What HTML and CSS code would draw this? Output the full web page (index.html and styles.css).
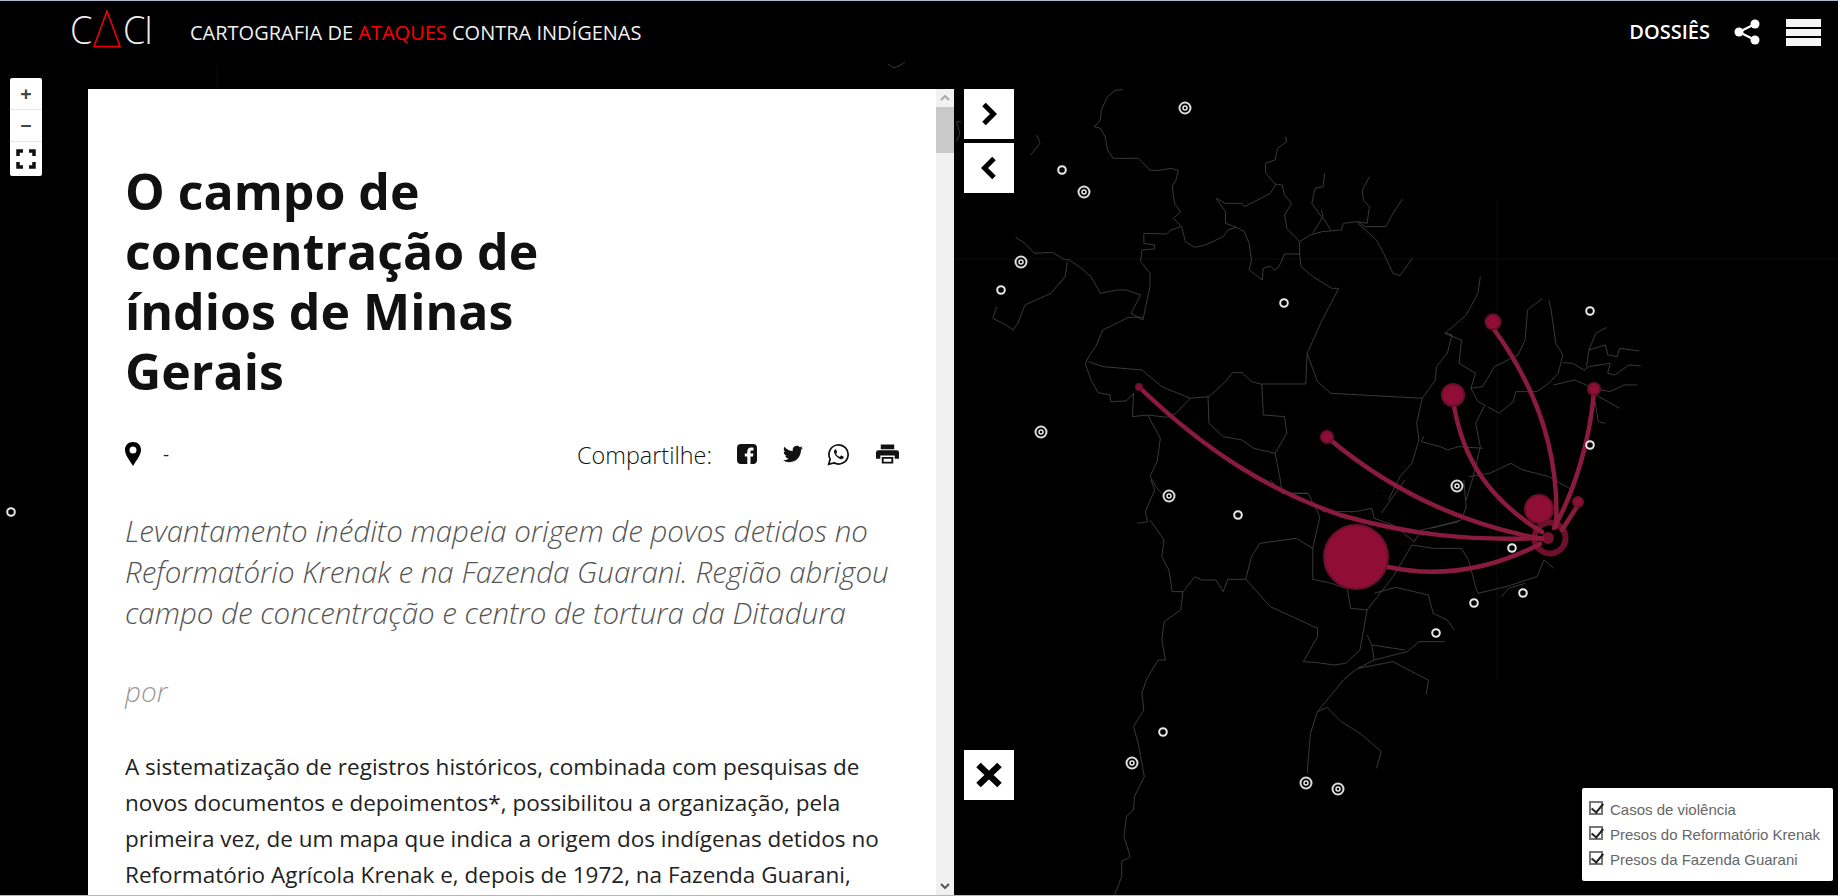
FILE: index.html
```html
<!DOCTYPE html>
<html lang="pt-BR">
<head>
<meta charset="utf-8">
<title>CACI - Cartografia de ataques contra indígenas</title>
<link rel="stylesheet" href="styles.css">
</head>
<body>
<svg class="map" viewBox="0 0 1838 896" width="1838" height="896" aria-hidden="true">
  <path class="faint" d="M954 259H1838M1497 200V680M217 65V89"/>
  <g transform="translate(940,80) scale(.4719,.3333)">
    <path class="border" d="M387 28 370 32 355 50 342 90 340 120 327 140 340 145 350 170 355 210 367 235 405 235 420 235 445 270 460 272 490 265 505 272 500 300 492 320 497 370 510 395 495 415 512 440 520 485 540 502 562 495 570 490 600 470 610 450 628 442 645 455 655 490 660 540 655 570 683 600 685 565 700 558 710 572 720 555 730 522 762 522 762 485 785 465 810 455 850 450 855 430 885 425 900 440 945 440 960 400 980 357"/>
    <path class="border" d="M732 170 735 185 715 205 710 240 690 250 690 280 710 312 725 315 730 345 745 370 730 405 735 445 762 485"/>
    <path class="border" d="M585 355 605 370 640 370 645 380 680 355 700 340 712 312M585 355 605 395 605 430 628 442"/>
    <path class="border" d="M815 280 812 320 795 325 788 370 808 410 815 420 828 450M808 390 812 410 790 460M910 290 895 330 897 360 910 380 905 430 885 425"/>
    <path class="border" d="M885 430 925 480 940 520 960 580 975 587 1000 537"/>
    <path class="border" d="M762 522 765 560 790 590 830 625 845 625 810 720 778 820 800 905 828 940 1022 955"/>
    <path class="border" d="M1145 590 1140 640 1115 705 1070 760 1085 765 1075 820 1052 860 1050 900 1022 955 1010 1030 1015 1080 1000 1150 975 1190 950 1260"/>
    <path class="border" d="M432 460 480 462 490 450 510 440M432 460 432 490 455 495 455 507 428 510 425 545 445 580 445 620 430 720"/>
    <path class="border" d="M160 472 180 490 200 520 238 517 265 540 272 538 295 560 320 590 340 640 375 630 395 630 425 645 405 700 430 720"/>
    <path class="border" d="M270 545 265 590 235 640 180 675 165 730 155 750 140 735 112 715 120 680"/>
    <path class="border" d="M430 712 400 712 345 750 330 800 315 830 308 852 320 900 335 938 360 945 362 965 395 963 410 940 408 1010 440 1005 480 1012 500 1000 530 955 570 950 605 905 620 878 640 878 660 905 680 912 775 912 778 820"/>
    <path class="border" d="M315 845 345 860 428 870 470 920 530 955M568 950 570 1030 600 1070 640 1080 665 1105 710 1120 735 1060 730 1010 685 1005 682 912M710 1120 720 1190 725 1240 780 1240M440 1005 467 1075 460 1145 445 1190 460 1225 470 1240"/>
    <path class="border" d="M1277 655 1245 690 1240 780 1225 825 1175 860 1150 920 1125 925 1140 965 1155 975 1135 1030 1145 1100 1130 1190 1115 1260M1070 760 1105 780 1100 850 1135 880 1125 925"/>
    <path class="border" d="M1290 660 1295 690 1305 790 1320 825 1310 880 1290 910 1265 935 1220 935 1215 965 1185 1000 1160 980M1320 848 1340 850 1365 870 1375 860 1420 850 1415 880 1430 885 1460 855 1485 858"/>
    <path class="border" d="M1413 742 1390 760 1375 810 1370 860M1375 810 1410 795 1415 825 1435 830 1440 805 1482 813M1300 915 1345 900 1385 925 1420 935 1450 915 1478 915M1390 945 1440 985M1385 940 1395 1025 1410 1030"/>
    <path class="border" d="M1025 1070 1020 1085 1060 1100 1075 1110 1100 1100 1150 1105M1120 1190 1165 1180 1210 1150 1235 1170 1290 1190 1340 1230"/>
    <path class="border" d="M205 165 212 190 192 225M45 125 35 125 42 160 35 185"/>
  </g>
  <g transform="translate(940,480) scale(.4719,.3333)">
    <path class="border" d="M447 0 455 30 435 95 440 125 418 130M445 120 475 180 470 230 485 270 492 335 515 335 540 290 555 300 585 300 600 335 610 298 648 298 700 380 800 445 800 470 770 545 800 548 835 555 860 550 890 510 905 390 870 385 863 325"/>
    <path class="border" d="M648 298 660 230 678 190 755 175 790 205 790 298 830 310 860 325"/>
    <path class="border" d="M515 335 510 390 475 425 470 480 478 540 462 540 437 600 428 640 432 690 410 740 420 790 433 890 412 950 410 990 395 1010 390 1070 403 1130 385 1145 385 1190 370 1245"/>
    <path class="border" d="M905 390 960 290 1000 195 1045 205 1105 205 1120 240 1135 320 1140 340 1200 320 1265 290 1280 240 1300 265"/>
    <path class="border" d="M920 340 965 322 1035 345 1045 400 1075 420 1090 450M905 465 915 495 920 540 990 515 1015 485 1070 485M915 495 985 510"/>
    <path class="border" d="M920 540 880 570 855 600 800 695 785 760 778 880M800 695 820 682 850 725 890 760 935 815 925 865M885 565 960 545 1000 575 1035 600 1030 645"/>
    <path class="border" d="M700 0 725 40 780 40 805 110 790 205M935 100 985 0M810 95 880 95 915 85 920 115 960 135 1005 185 1020 150 1100 125M1110 0 1115 80 1105 120 1040 145M1190 350 1205 325 1240 310"/>
  </g>
  <path class="border" d="M888 64 894 68 901 65 905 62"/>

  <circle class="ring" cx="1550" cy="538" r="15.5"/>
  <circle class="hub" cx="1548" cy="538" r="6"/>

  <path class="curve" d="M1139 387C1210 455 1270 490 1340 515 1410 535 1470 541 1542 538"/>
  <path class="curve" d="M1327 437C1380 482 1450 522 1542 539"/>
  <path class="curve" d="M1453 400C1462 460 1490 500 1542 532"/>
  <path class="curve" d="M1493 328C1535 385 1560 450 1556 527"/>
  <path class="curve" d="M1594 392C1590 440 1575 490 1554 528"/>
  <path class="curve" d="M1578 505 1562 530"/>
  <path class="curve" d="M1388 567C1440 578 1490 570 1540 544"/>

  <circle class="node" cx="1356" cy="557" r="32"/>
  <circle class="node" cx="1453" cy="395" r="11"/>
  <circle class="node" cx="1493" cy="322" r="7.5"/>
  <circle class="node" cx="1327" cy="437" r="6"/>
  <circle class="node" cx="1139" cy="387" r="3"/>
  <circle class="node" cx="1594" cy="389" r="6"/>
  <circle class="node" cx="1539" cy="509" r="14"/>
  <circle class="node" cx="1578" cy="502" r="5"/>

  <g class="single">
    <circle cx="11" cy="512" r="3.8"/><circle cx="1062" cy="170" r="3.8"/><circle cx="1001" cy="290" r="3.8"/>
    <circle cx="1284" cy="303" r="3.8"/><circle cx="1590" cy="311" r="3.8"/><circle cx="1590" cy="445" r="3.8"/>
    <circle cx="1238" cy="515" r="3.8"/><circle cx="1512" cy="548" r="3.8"/><circle cx="1523" cy="593" r="3.8"/>
    <circle cx="1474" cy="603" r="3.8"/><circle cx="1436" cy="633" r="3.8"/><circle cx="1163" cy="732" r="3.8"/>
  </g>
  <g class="double">
    <circle cx="1185" cy="108" r="5.5"/><circle cx="1084" cy="192" r="5.5"/><circle cx="1021" cy="262" r="5.5"/>
    <circle cx="1041" cy="432" r="5.5"/><circle cx="1457" cy="486" r="5.5"/><circle cx="1169" cy="496" r="5.5"/>
    <circle cx="1132" cy="763" r="5.5"/><circle cx="1306" cy="783" r="5.5"/><circle cx="1338" cy="789" r="5.5"/>
  </g>
  <g class="dots">
    <circle cx="1185" cy="108" r="2"/><circle cx="1084" cy="192" r="2"/><circle cx="1021" cy="262" r="2"/>
    <circle cx="1041" cy="432" r="2"/><circle cx="1457" cy="486" r="2"/><circle cx="1169" cy="496" r="2"/>
    <circle cx="1132" cy="763" r="2"/><circle cx="1306" cy="783" r="2"/><circle cx="1338" cy="789" r="2"/>
  </g>
</svg>

<header class="topbar">
  <a class="logo">
    <span>C</span>
    <svg class="logo-tri" viewBox="0 0 28 38" width="28" height="38" aria-hidden="true"><path d="M14 1 1 36.500H27Z"/></svg>
    <span>C</span><span class="logo-i">I</span>
  </a>
  <h2 class="site-title">CARTOGRAFIA DE <span class="red">ATAQUES</span> CONTRA INDÍGENAS</h2>
  <nav class="topnav">
    <a class="dossies">DOSSIÊS</a>
    <svg class="share" viewBox="0 0 26 26" width="26" height="26" aria-hidden="true">
      <path class="share-line" d="M21 5 5 13 21 21"/>
      <circle cx="21" cy="5" r="4.500"/><circle cx="5" cy="13" r="4.500"/><circle cx="21" cy="21" r="4.500"/>
    </svg>
    <div class="burger"><i></i><i></i><i></i></div>
  </nav>
</header>

<div class="zoom-control">
  <button class="zoom-btn">+</button>
  <button class="zoom-btn">−</button>
  <button class="zoom-btn zoom-full" aria-label="Tela cheia">
    <svg viewBox="0 0 20 20" width="20" height="20" aria-hidden="true"><path d="M2 7V2H7M13 2H18V7M18 13V18H13M7 18H2V13"/></svg>
  </button>
</div>

<main class="stage">
  <article class="panel">
    <div class="panel-body">
      <h1 class="title">O campo de concentração de índios de Minas Gerais</h1>
      <div class="meta">
        <div class="place">
          <svg class="pin" viewBox="0 0 18 24" width="18" height="24" aria-hidden="true"><path fill-rule="evenodd" d="M9 0C4 0 1 3.500 1 8c0 5 5 11 8 16 3-5 8-11 8-16C17 3.500 14 0 9 0ZM9 4.500A3.500 3.500 0 1 1 9 11.500 3.500 3.500 0 0 1 9 4.500Z"/></svg>
          <span>-</span>
        </div>
        <div class="sharebar">
          <span class="share-label">Compartilhe:</span>
          <svg class="ic" viewBox="0 0 20 20" width="20" height="20" aria-hidden="true"><path fill-rule="evenodd" d="M4 0H16A4 4 0 0 1 20 4V16A4 4 0 0 1 16 20H13.500V12.500H16L16.400 9.500H13.500V8C13.500 7 13.800 6.500 15 6.500H16.500V3.800C16 3.700 15 3.600 14 3.600 11.800 3.600 10.300 5 10.300 7.500V9.500H7.800V12.500H10.300V20H4A4 4 0 0 1 0 16V4A4 4 0 0 1 4 0Z"/></svg>
          <svg class="ic ic-tw" viewBox="0 0 24 24" width="20" height="20" aria-hidden="true"><path d="M23.953 4.570a10 10 0 0 1-2.825.775 4.958 4.958 0 0 0 2.163-2.723c-.951.555-2.005.959-3.127 1.184a4.920 4.920 0 0 0-8.384 4.482C7.690 8.095 4.067 6.130 1.640 3.162a4.822 4.822 0 0 0-.666 2.475c0 1.710.870 3.213 2.188 4.096a4.904 4.904 0 0 1-2.228-.616v.060a4.923 4.923 0 0 0 3.946 4.827 4.996 4.996 0 0 1-2.212.085 4.936 4.936 0 0 0 4.604 3.417 9.867 9.867 0 0 1-6.102 2.105c-.390 0-.779-.023-1.170-.067a13.995 13.995 0 0 0 7.557 2.209c9.053 0 13.998-7.496 13.998-13.985 0-.210 0-.420-.015-.630A9.935 9.935 0 0 0 24 4.590Z"/></svg>
          <svg class="ic ic-wa" viewBox="0 0 24 24" width="23" height="23" aria-hidden="true">
            <path class="wa-ring" d="M1.800 22.200 3.300 16.800A10 10 0 1 1 7.200 20.700Z"/>
            <path d="M8.700 6.500C8 6.900 7.200 7.800 7.300 9.200 7.500 11.500 9.800 15.200 13.700 16.700 15.300 17.200 16.600 16.700 17.200 15.700 17.500 15.100 17.500 14.500 17.400 14.300L15.100 13.100C14.800 13 14.600 13 14.400 13.300L13.600 14.300C13.400 14.500 13.200 14.500 13 14.400 11.500 13.800 10.400 12.800 9.700 11.400 9.600 11.100 9.600 11 9.800 10.800L10.400 10 10.500 9.500 9.500 6.800C9.300 6.400 9.100 6.400 8.700 6.500Z"/>
          </svg>
          <svg class="ic ic-pr" viewBox="0 0 24 20" width="23" height="20" aria-hidden="true"><path fill-rule="evenodd" d="M5 0H19V5H5ZM2.500 6H21.500A2.500 2.500 0 0 1 24 8.500V15H19.500V11.500H4.500V15H0V8.500A2.500 2.500 0 0 1 2.500 6ZM6 13H18V20H6ZM8 15V18H16V15Z"/></svg>
        </div>
      </div>
      <p class="lede">Levantamento inédito mapeia origem de povos detidos no Reformatório Krenak e na Fazenda Guarani. Região abrigou campo de concentração e centro de tortura da Ditadura</p>
      <p class="byline">por</p>
      <p class="text">A sistematização de registros históricos, combinada com pesquisas de novos documentos e depoimentos*, possibilitou a organização, pela primeira vez, de um mapa que indica a origem dos indígenas detidos no Reformatório Agrícola Krenak e, depois de 1972, na Fazenda Guarani,</p>
    </div>
    <div class="scrollbar">
      <svg class="sb-arrow" viewBox="0 0 10 6" width="10" height="6" aria-hidden="true"><path d="M1 5 5 1 9 5"/></svg>
      <div class="sb-thumb"></div>
      <svg class="sb-arrow sb-down" viewBox="0 0 10 6" width="10" height="6" aria-hidden="true"><path d="M1 1 5 5 9 1"/></svg>
    </div>
  </article>

  <div class="side-buttons">
    <button class="side-btn"><svg viewBox="0 0 16 24" width="16" height="24" aria-hidden="true"><path d="M3 2.500 12.500 12 3 21.500"/></svg></button>
    <button class="side-btn"><svg viewBox="0 0 16 24" width="16" height="24" aria-hidden="true"><path d="M13 2.500 3.500 12 13 21.500"/></svg></button>
    <button class="side-btn side-close"><svg viewBox="0 0 28 26" width="28" height="26" aria-hidden="true"><path d="M3.500 3 24.500 23M24.500 3 3.500 23"/></svg></button>
  </div>

  <form class="legend">
    <label class="legend-row"><input type="checkbox" checked> Casos de violência</label>
    <label class="legend-row"><input type="checkbox" checked> Presos do Reformatório Krenak</label>
    <label class="legend-row"><input type="checkbox" checked> Presos da Fazenda Guarani</label>
  </form>
</main>
</body>
</html>
```

FILE: styles.css
```css
* { box-sizing: border-box; }
html, body { margin: 0; height: 896px; overflow: hidden; }
body {
  background: #000;
  border-top: 1px solid #a9bacb;
  border-bottom: 1px solid #a9bacb;
  font-family: "Open Sans", sans-serif;
  display: flex;
  flex-direction: column;
  position: relative;
}
a { color: inherit; text-decoration: none; }
button { border: 0; padding: 0; background: #fff; font: inherit; }

/* map canvas */
.map { position: absolute; left: 0; top: -1px; display: block; }
.border { fill: none; stroke: #484848; stroke-width: .8; vector-effect: non-scaling-stroke; stroke-linejoin: round; }
.faint { fill: none; stroke: #0c0c0c; stroke-width: 1; }
.curve { fill: none; stroke: #8a1a3e; stroke-width: 4.5; stroke-linecap: round; }
.node { fill: #8f0d36; stroke: #6b0f2e; stroke-width: 2; }
.ring { fill: none; stroke: #6e0f2d; stroke-width: 6; }
.hub { fill: #741030; }
.single circle { fill: #000; stroke: #e8e8e8; stroke-width: 2; }
.double circle { fill: #000; stroke: #dcdcdc; stroke-width: 2; }
.dots circle { fill: #000; stroke: #e8e8e8; stroke-width: 1.5; }

/* top bar */
.topbar {
  position: relative;
  height: 88px;
  flex: none;
  display: flex;
  align-items: flex-start;
  padding: 9px 17px 0 70px;
  color: #fff;
}
.logo {
  display: flex;
  align-items: flex-end;
  height: 38px;
  font-weight: 300;
  font-size: 38px;
  line-height: 38px;
  color: #eee;
  width: 120px;
  flex: none;
}
.logo span { display: block; line-height: 38px; transform: scaleX(.95); transform-origin: left bottom; width: 24px; margin-top: 1px; }
.logo span.logo-i { width: 6px; margin-left: -3px; }
.logo-tri { flex: none; margin: 0 2px 0 -1px; }
.logo-tri path { fill: none; stroke: #f00008; stroke-width: 1.6; }
.site-title { margin: 9px 0 0; font-size: 20px; font-weight: 400; line-height: 27px; color: #f0f0f0; white-space: nowrap; }
.red { color: #f00; }
.topnav { margin-left: auto; display: flex; align-items: flex-start; margin-top: 9px; }
.dossies { font-weight: 600; font-size: 20px; line-height: 26px; }
.share { margin: 0 0 0 24px; }
.share circle { fill: #fff; }
.share-line { fill: none; stroke: #fff; stroke-width: 2.2; }
.burger { margin: 0 0 0 26px; width: 35px; display: flex; flex-direction: column; gap: 2px; }
.burger i { display: block; height: 7.5px; background: #f5f5f5; }

/* zoom control */
.zoom-control {
  position: absolute; left: 10px; top: 77px; width: 32px; height: 98px;
  background: #fff; border-radius: 2px; display: flex; flex-direction: column;
}
.zoom-btn { height: 32px; flex: none; font-size: 20px; font-weight: 700; color: #444; border-bottom: 1px solid #e6e6e6; background: none; line-height: 28px; }
.zoom-full { height: 34px; border: 0; display: flex; align-items: center; justify-content: center; }
.zoom-full path { fill: none; stroke: #111; stroke-width: 3.5; }

/* content */
.stage { position: relative; flex: 1; min-height: 0; display: flex; padding-left: 88px; }
.panel { width: 866px; display: flex; background: #fff; height: 100%; overflow: hidden; flex: none; }
.panel-body { flex: 1; min-width: 0; padding: 72px 37px 0; }
.title { margin: 0 0 41px; max-width: 440px; font-size: 50px; line-height: 60px; font-weight: 700; color: #111; }
.meta { display: flex; justify-content: space-between; align-items: center; height: 24px; }
.place { display: flex; align-items: center; gap: 21px; font-size: 19px; color: #222; margin-left: -1px; }
.pin { fill: #000; }
.sharebar { display: flex; align-items: center; }
.share-label { font-size: 23.4px; font-weight: 300; color: #111; margin-right: 25px; margin-top: 2px; }
.ic { fill: #111; flex: none; }
.ic-tw { margin-left: 26px; }
.ic-wa { margin-left: 24px; }
.ic-pr { margin-left: 26px; }
.wa-ring { fill: none; stroke: #111; stroke-width: 1.8; }
.lede { margin: 44px 0 0; font-size: 29.500px; line-height: 41px; font-style: italic; font-weight: 300; color: #555; }
.byline { margin: 38px 0 0; font-size: 28px; line-height: 41px; font-style: italic; font-weight: 300; color: #999; }
.text { margin: 37px 0 0; font-size: 22.500px; line-height: 36px; color: #222; }

.scrollbar { width: 18px; flex: none; background: #f1f1f1; position: relative; display: flex; flex-direction: column; align-items: center; }
.sb-arrow { flex: none; margin-top: 6px; }
.sb-arrow path { fill: none; stroke: #a8a8a8; stroke-width: 2; }
.sb-thumb { width: 18px; height: 46px; background: #c9c9c9; margin-top: 6px; flex: none; }
.sb-down { margin-top: auto; margin-bottom: 6px; }
.sb-down path { stroke: #555; }

.side-buttons { display: flex; flex-direction: column; margin-left: 10px; gap: 4px; width: 50px; padding-bottom: 95px; }
.side-btn { width: 50px; height: 50px; display: flex; align-items: center; justify-content: center; flex: none; }
.side-btn path { fill: none; stroke: #000; stroke-width: 5; }
.side-close { margin-top: auto; }
.side-close path { stroke-width: 6.500; }

.legend {
  position: absolute; right: 5px; bottom: 14px; width: 251px; height: 93px;
  background: #fff; border-radius: 2px; padding: 9px 0 0 7px;
  font-family: "Liberation Sans", Arial, sans-serif; font-size: 15px; color: #666;
}
.legend-row { display: flex; align-items: center; gap: 7px; height: 25px; }
.legend-row input {
  appearance: none; -webkit-appearance: none;
  margin: 0 0 3px; width: 14px; height: 14px; flex: none; position: relative;
  border: 2px solid #777; background: #fff;
}
.legend-row input::after {
  content: ""; position: absolute; left: 3px; top: -2px; width: 5px; height: 10px;
  border: solid #222; border-width: 0 2px 2px 0; transform: rotate(40deg);
}
```
